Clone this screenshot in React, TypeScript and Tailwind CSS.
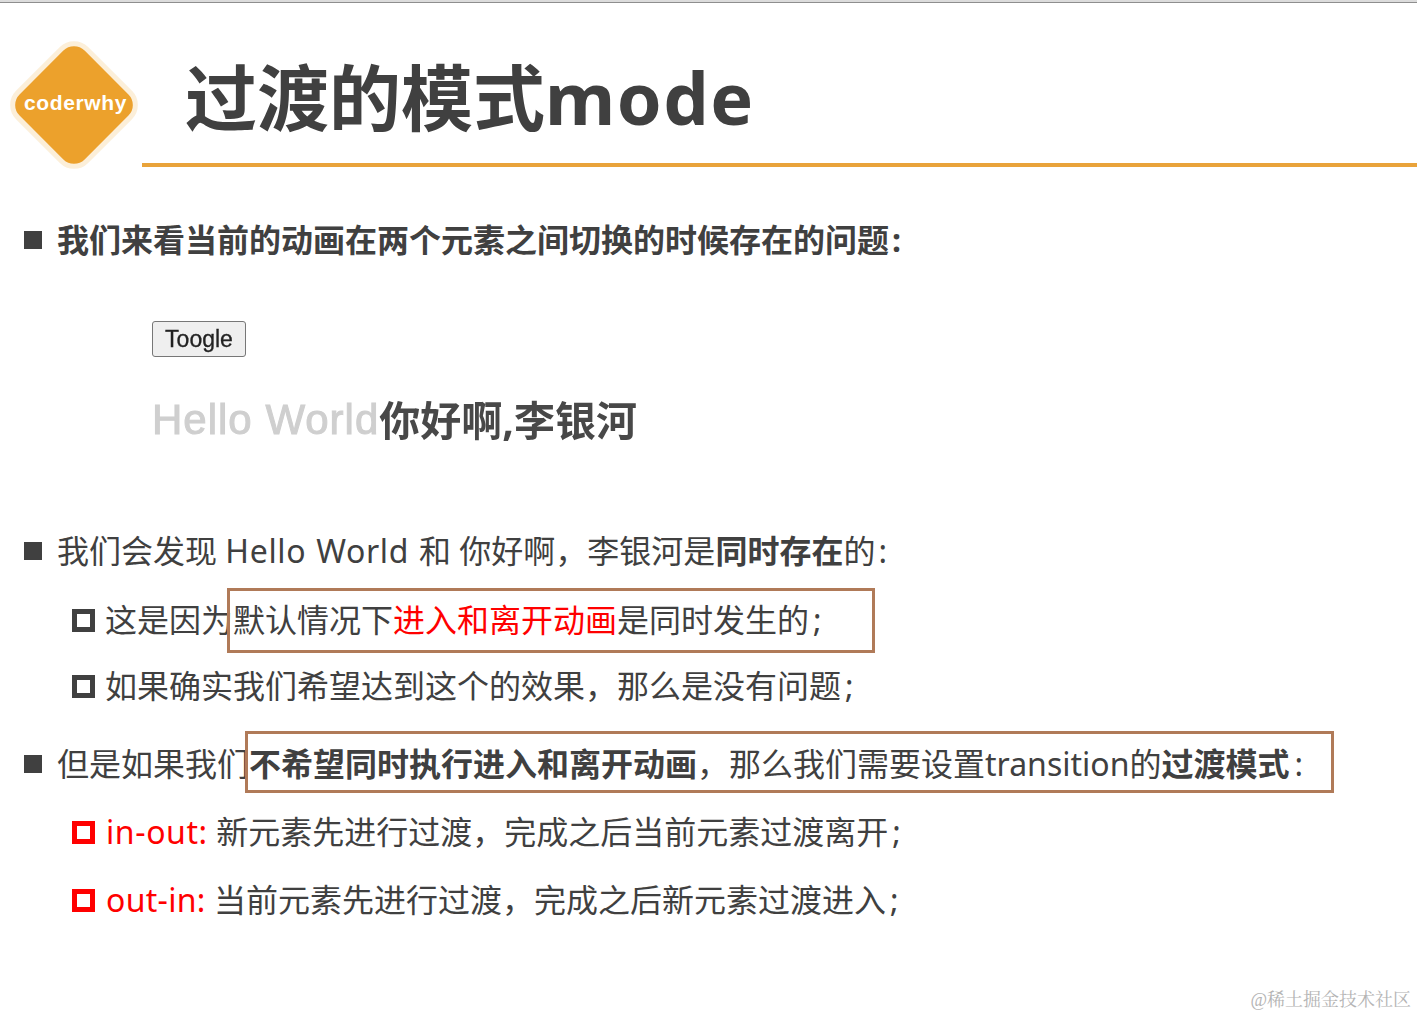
const cjk = "font-['Noto_Sans','Noto_Sans_CJK_SC',sans-serif]";

function FilledBullet() {
  return <span className="h-[18px] w-[18px] shrink-0 bg-[#404040]" />;
}

function HollowBullet({ red }: { red?: boolean }) {
  return (
    <span
      className={`h-[23px] w-[23px] shrink-0 border-[5px] ${red ? "border-[#ff0000]" : "border-[#404040]"}`}
    />
  );
}

function Logo() {
  return (
    <div className="relative h-[128px] w-[128px] shrink-0">
      <div className="absolute left-[13px] top-[13px] h-[102px] w-[102px] rotate-45 rounded-[20px] border-[5px] border-[#fcefd9] bg-[#eca12c]" />
      <span className="absolute inset-x-0 top-[50px] pl-[3px] text-center font-['Liberation_Sans',sans-serif] text-[21px] font-bold leading-[24px] tracking-[0.6px] text-white">
        coderwhy
      </span>
    </div>
  );
}

export default function App() {
  return (
    <div className={`relative h-[1017px] w-[1417px] overflow-hidden bg-white text-[#404040] ${cjk}`}>
      <div className="h-[3px] border-b border-[#8e8e8e] bg-[#dcdcdc]" />

      {/* Header */}
      <div className="relative h-[164px]">
        <div className="absolute left-[10px] top-[38px]">
          <Logo />
        </div>
        <h1 className="absolute left-[185px] top-[42px] whitespace-nowrap text-[72px] font-bold leading-[104px]">
          过渡的模式<span className="tracking-[1.5px]">mode</span>
        </h1>
        <div className="absolute bottom-0 left-[142px] right-0 h-1 bg-[#e9a33a]" />
      </div>

      {/* First bullet */}
      <div className="mt-[50px] flex h-[46px] items-center gap-[15px] pl-[24px] text-[32px] leading-[46px]">
        <FilledBullet />
        <span className="font-bold">
          我们来看当前的动画在两个元素之间切换的时候存在的问题<span className="ml-[3px]">:</span>
        </span>
      </div>

      {/* Demo */}
      <div className="pl-[152px] pt-[58px]">
        <button className="flex h-[36px] w-[94px] items-center justify-center rounded-[3px] border border-[#777777] bg-[#efefef] font-['Liberation_Sans',sans-serif] text-[23px] text-[#222222] blur-[0.3px] [-webkit-text-stroke:0.3px_#222222]">
          Toogle
        </button>
        <div className="mt-[35px] flex h-[56px] items-center whitespace-nowrap leading-[56px] blur-[0.5px]">
          <span className="font-['Liberation_Sans',sans-serif] text-[42px] tracking-[1px] text-[#cfcfcf] [-webkit-text-stroke:1px_#cfcfcf]">Hello World</span>
          <span className="text-[41px] font-bold text-[#484848]">你好啊,李银河</span>
        </div>
      </div>

      {/* Second block */}
      <div className="mt-[80px] flex flex-col text-[32px] leading-[46px]">
        <div className="flex h-[46px] items-center gap-[15px] pl-[24px]">
          <FilledBullet />
          <span className="whitespace-nowrap">
            我们会发现 <span className="tracking-[0.65px] [word-spacing:1px]">Hello World </span>和 你好啊，李银河是<b>同时存在</b>的<span className="ml-[3px]">:</span>
          </span>
        </div>
        <div className="mt-[23px] flex h-[46px] items-center gap-[10px] pl-[72px]">
          <HollowBullet />
          <span className="whitespace-nowrap">
            这是因为默认情况下<span className="text-[#ff0000]">进入和离开动画</span>是同时发生的<span className="ml-[4px]">;</span>
          </span>
        </div>
        <div className="mt-[20px] flex h-[46px] items-center gap-[10px] pl-[72px]">
          <HollowBullet />
          <span className="whitespace-nowrap">
            如果确实我们希望达到这个的效果，那么是没有问题<span className="ml-[4px]">;</span>
          </span>
        </div>
        <div className="mt-[32px] flex h-[46px] items-center gap-[15px] pl-[24px]">
          <FilledBullet />
          <span className="whitespace-nowrap">
            但是如果我们<b>不希望同时执行进入和离开动画</b>，那么我们需要设置transition的<b>过渡模式</b><span className="ml-[5px]">:</span>
          </span>
        </div>
        <div className="mt-[22px] flex h-[46px] items-center gap-[11px] pl-[72px]">
          <HollowBullet red />
          <span className="whitespace-nowrap">
            <span className="tracking-[0.6px] text-[#ff0000]">in-out:</span> 新元素先进行过渡，完成之后当前元素过渡离开<span className="ml-[4px]">;</span>
          </span>
        </div>
        <div className="mt-[22px] flex h-[46px] items-center gap-[11px] pl-[72px]">
          <HollowBullet red />
          <span className="whitespace-nowrap">
            <span className="tracking-[0.3px] text-[#ff0000]">out-in:</span> 当前元素先进行过渡，完成之后新元素过渡进入<span className="ml-[4px]">;</span>
          </span>
        </div>
      </div>

      {/* Highlight boxes */}
      <div className="absolute left-[227px] top-[588px] h-[65px] w-[648px] border-[3px] border-[#b07a58]" />
      <div className="absolute left-[245px] top-[731px] h-[62px] w-[1089px] border-[3px] border-[#b07a58]" />

      {/* Watermark */}
      <div className="absolute bottom-[5px] right-[6px] font-['Liberation_Serif','Noto_Serif_CJK_SC','Noto_Sans_CJK_SC',serif] text-[18px] leading-[24px] text-[#b4b4b4]">
        @稀土掘金技术社区
      </div>
    </div>
  );
}
